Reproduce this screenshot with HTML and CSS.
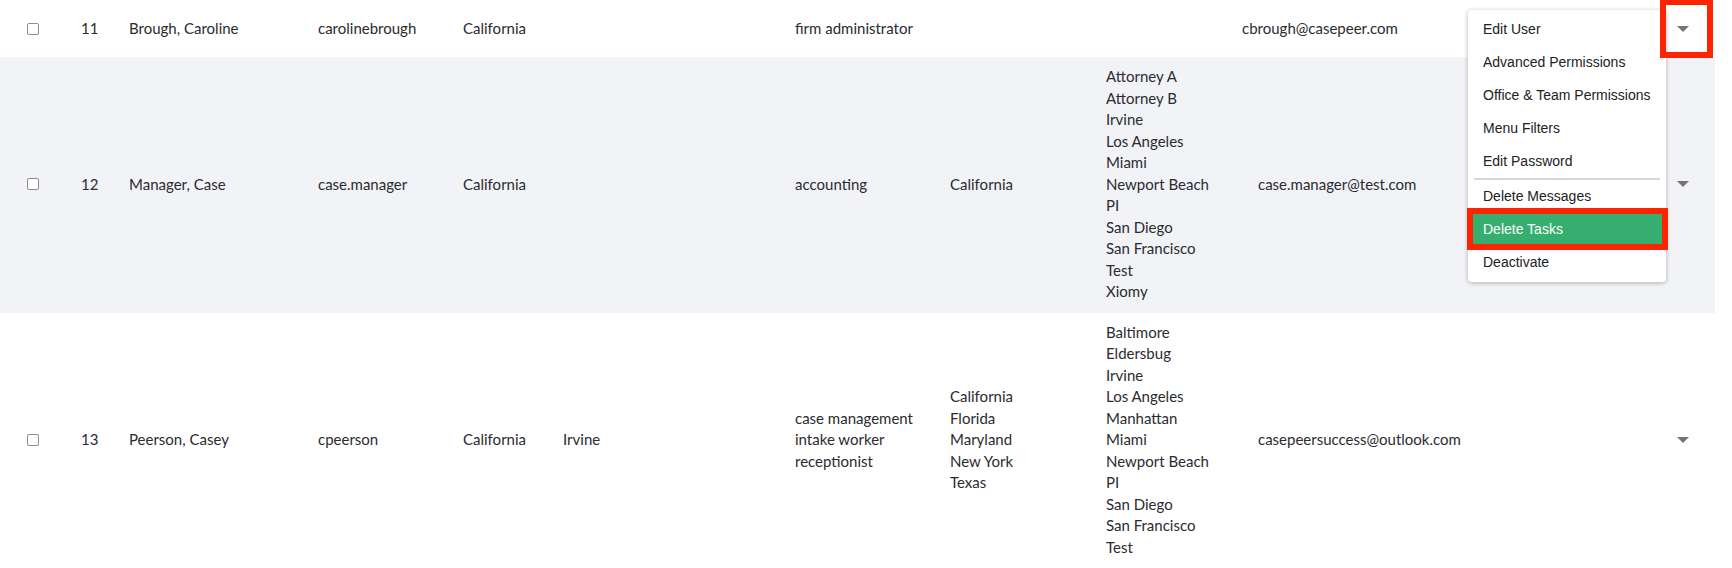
FILE: index.html
```html
<!DOCTYPE html>
<html lang="en">
<head>
<meta charset="utf-8">
<title>Users</title>
<link rel="stylesheet" href="styles.css">
</head>
<body>
<div class="users">
  <div class="row row-first">
    <div class="cell"><span class="checkbox"></span></div>
    <div class="cell">11</div>
    <div class="cell">Brough, Caroline</div>
    <div class="cell">carolinebrough</div>
    <div class="cell">California</div>
    <div class="cell"></div>
    <div class="cell">firm administrator</div>
    <div class="cell"></div>
    <div class="cell"></div>
    <div class="cell">cbrough@casepeer.com</div>
    <div class="cell"><span class="caret"></span></div>
  </div>
  <div class="row row-alt">
    <div class="cell"><span class="checkbox"></span></div>
    <div class="cell">12</div>
    <div class="cell">Manager, Case</div>
    <div class="cell">case.manager</div>
    <div class="cell">California</div>
    <div class="cell"></div>
    <div class="cell">accounting</div>
    <div class="cell">California</div>
    <div class="cell list">
      <span>Attorney A</span><span>Attorney B</span><span>Irvine</span><span>Los Angeles</span><span>Miami</span><span>Newport Beach</span><span>PI</span><span>San Diego</span><span>San Francisco</span><span>Test</span><span>Xiomy</span>
    </div>
    <div class="cell">case.manager@test.com</div>
    <div class="cell"><span class="caret"></span></div>
  </div>
  <div class="row">
    <div class="cell"><span class="checkbox"></span></div>
    <div class="cell">13</div>
    <div class="cell">Peerson, Casey</div>
    <div class="cell">cpeerson</div>
    <div class="cell">California</div>
    <div class="cell">Irvine</div>
    <div class="cell list">
      <span>case management</span><span>intake worker</span><span>receptionist</span>
    </div>
    <div class="cell list">
      <span>California</span><span>Florida</span><span>Maryland</span><span>New York</span><span>Texas</span>
    </div>
    <div class="cell list">
      <span>Baltimore</span><span>Eldersbug</span><span>Irvine</span><span>Los Angeles</span><span>Manhattan</span><span>Miami</span><span>Newport Beach</span><span>PI</span><span>San Diego</span><span>San Francisco</span><span>Test</span>
    </div>
    <div class="cell">casepeersuccess@outlook.com</div>
    <div class="cell"><span class="caret"></span></div>
  </div>
</div>

<ul class="menu">
  <li class="menu-item">Edit User</li>
  <li class="menu-item">Advanced Permissions</li>
  <li class="menu-item">Office &amp; Team Permissions</li>
  <li class="menu-item">Menu Filters</li>
  <li class="menu-item">Edit Password</li>
  <li class="menu-divider"></li>
  <li class="menu-item">Delete Messages</li>
  <li class="menu-item menu-item-active">Delete Tasks</li>
  <li class="menu-item">Deactivate</li>
</ul>

<div class="highlight-box"></div>
</body>
</html>
```

FILE: styles.css
```css
html, body {
  margin: 0;
  padding: 0;
  background: #ffffff;
}

body {
  font-family: "Lato", "Open Sans", sans-serif;
  font-size: 15px;
  line-height: 21.5px;
  color: #2b2b30;
  overflow: hidden;
  width: 1732px;
  height: 568px;
  position: relative;
}

.users {
  width: 1715px;
}

.row {
  display: grid;
  grid-template-columns: 54px 48px 189px 145px 100px 232px 155px 156px 152px 419px 12px 26px;
  padding-left: 27px;
  align-items: center;
  min-height: 57px;
  box-sizing: border-box;
  padding-top: 9px;
  padding-bottom: 10px;
}

.row-first {
  grid-template-columns: 54px 48px 189px 145px 100px 232px 155px 156px 136px 435px 12px 26px;
  padding-top: 0;
  padding-bottom: 0;
}

.row-alt {
  background: #f2f3f7;
}

.cell {
  white-space: nowrap;
}

.list {
  display: flex;
  flex-direction: column;
}

.checkbox {
  display: block;
  width: 10px;
  height: 10px;
  border: 1.5px solid #8e8e8e;
  border-radius: 2px;
  background: #ffffff;
}

.caret {
  display: block;
  width: 0;
  height: 0;
  border-left: 6px solid transparent;
  border-right: 6px solid transparent;
  border-top: 6px solid #747474;
}

.menu {
  position: absolute;
  left: 1468px;
  top: 10px;
  width: 198px;
  margin: 0;
  padding: 3px 0 3px;
  list-style: none;
  background: #ffffff;
  border-radius: 4px;
  box-shadow: 0 1px 5px rgba(0, 0, 0, 0.28);
  font-family: "Liberation Sans", Arial, sans-serif;
  font-size: 14px;
  color: #222222;
  box-sizing: border-box;
}

.menu-item {
  height: 33px;
  line-height: 33px;
  padding-left: 15px;
  white-space: nowrap;
}

.menu-divider {
  height: 2px;
  margin: 0 6px;
  background: #d6d6d6;
}

.menu-item-active {
  height: 30px;
  line-height: 30px;
  margin: 1px 4px 2px 5px;
  padding-left: 10px;
  background: #35ae6f;
  color: #ffffff;
  outline: 6px solid #ff2400;
}

.highlight-box {
  position: absolute;
  left: 1660px;
  top: -1px;
  width: 53px;
  height: 59px;
  box-sizing: border-box;
  border: 6px solid #ff2400;
}
```
